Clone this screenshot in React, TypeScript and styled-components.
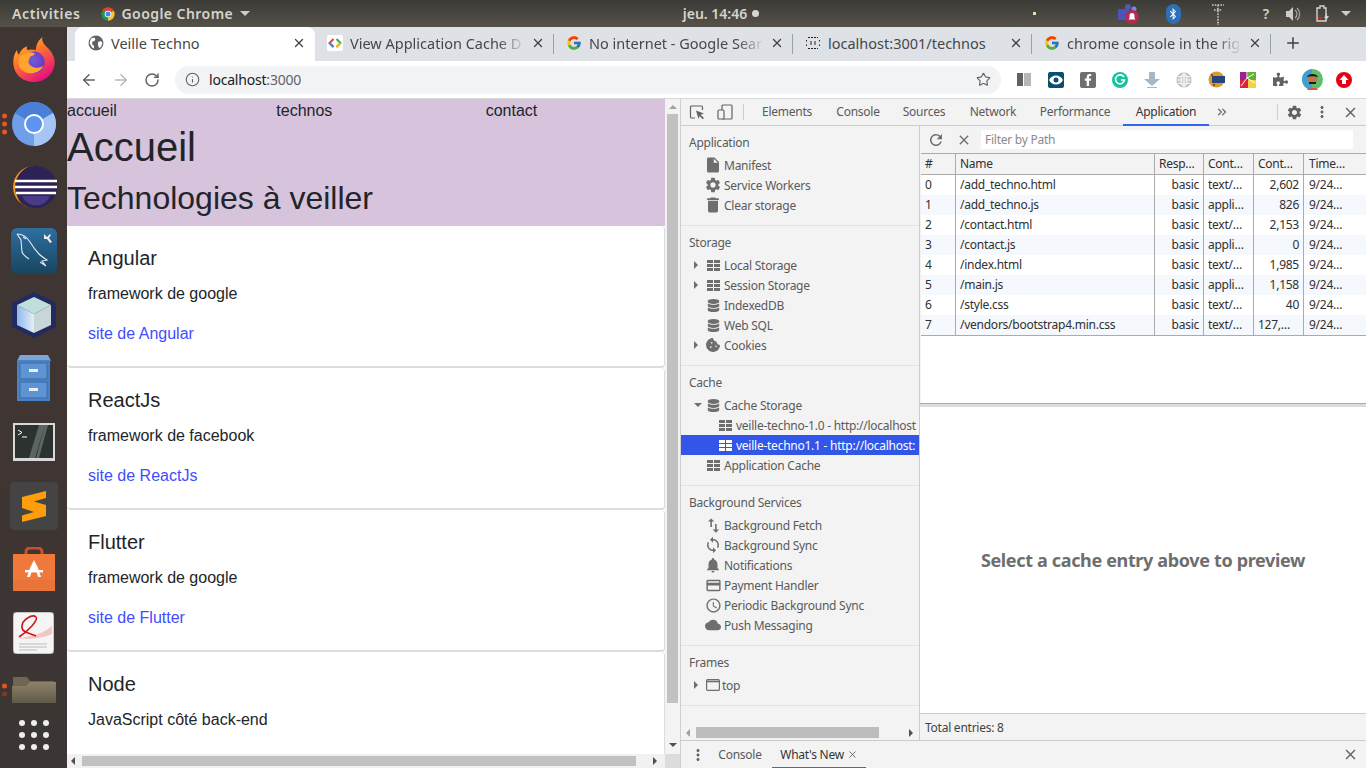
import React from 'react'
import styled, { createGlobalStyle } from 'styled-components'
import { FcGoogle } from 'react-icons/fc'
import { FaDatabase, FaCookieBite, FaPuzzlePiece, FaBluetoothB, FaFacebookF } from 'react-icons/fa'
import {
  MdAccessTime,
  MdClose,
  MdCloud,
  MdCreditCard,
  MdDelete,
  MdInsertDriveFile,
  MdMoreVert,
  MdNotifications,
  MdRefresh,
  MdSettings,
  MdSwapVert,
  MdSync,
} from 'react-icons/md'
import { ArrowLeft, ArrowRight, Info, RotateCw, Star, Plus, X, ChevronsRight } from 'lucide-react'

const UI_FONT = `'Noto Sans', 'Open Sans', sans-serif`
const PAGE_FONT = `'Liberation Sans', Arial, sans-serif`

const GlobalStyle = createGlobalStyle`
  html, body {
    margin: 0;
    padding: 0;
    width: 1366px;
    height: 768px;
    overflow: hidden;
    background: #3d3533;
  }
  * { box-sizing: border-box; }
`

const Screen = styled.div`
  width: 1366px;
  height: 768px;
  display: flex;
  flex-direction: column;
  overflow: hidden;
  font-family: ${UI_FONT};
`

const TopBar = styled.header`
  height: 27px;
  flex: none;
  display: grid;
  grid-template-columns: 1fr auto 1fr;
  align-items: center;
  background: linear-gradient(#3b3a36, #55524a);
  color: #d6d4cc;
  font-size: 14px;
  font-weight: 600;
  padding-left: 12px;
`

const TopLeft = styled.div`
  display: flex;
  align-items: center;
`

const AppName = styled.span`
  margin-left: 5px;
  letter-spacing: 0.45px;
`

const Caret = styled.span`
  width: 0;
  height: 0;
  margin-left: 7px;
  border-left: 5px solid transparent;
  border-right: 5px solid transparent;
  border-top: 5px solid #cfcdc5;
`

const Activities = styled.span`
  margin-right: 20px;
  letter-spacing: 0.6px;
`

const Clock = styled.div`
  display: flex;
  align-items: center;
  gap: 5px;
  margin-left: 64px;
`

const ClockDot = styled.span`
  width: 7px;
  height: 7px;
  border-radius: 50%;
  background: #d6d4cc;
`

const Tray = styled.div`
  display: flex;
  align-items: center;
  justify-content: flex-end;
  height: 27px;
  position: relative;
  padding-right: 15px;
`

const TrayDot = styled.span`
  position: absolute;
  right: 330px;
  top: 12px;
  width: 3px;
  height: 3px;
  background: #e8e2a0;
`

const TraySlot = styled.span<{ $w: number }>`
  width: ${(p) => p.$w}px;
  flex: none;
  display: flex;
  justify-content: center;
  align-items: center;
`

const BluetoothBadge = styled.span`
  width: 15px;
  height: 20px;
  flex: none;
  border-radius: 8px;
  background: #2f6fb5;
  color: #fff;
  display: flex;
  align-items: center;
  justify-content: center;
`

const Desktop = styled.div`
  flex: 1;
  display: flex;
  min-height: 0;
`

const Dock = styled.nav`
  width: 67px;
  flex: none;
  display: flex;
  flex-direction: column;
  align-items: center;
  background: linear-gradient(#3f3533, #3f3533 60%, #3b3633);
  padding: 1px 0 13px;
`

const DockItem = styled.div<{ $h?: number }>`
  height: ${(p) => p.$h ?? 63.7}px;
  width: 67px;
  flex: none;
  position: relative;
  display: flex;
  align-items: center;
  justify-content: center;
`

const RunDots = styled.div`
  position: absolute;
  left: 2px;
  top: 50%;
  transform: translateY(-50%);
  display: flex;
  flex-direction: column;
  gap: 3px;
`

const RunDot = styled.span<{ $dim?: boolean }>`
  width: 5px;
  height: 5px;
  border-radius: 50%;
  background: ${(p) => (p.$dim ? '#7c3a22' : '#e9541f')};
`

const Browser = styled.div`
  flex: 1;
  min-width: 0;
  display: flex;
  flex-direction: column;
`

const TabStrip = styled.div`
  height: 34px;
  flex: none;
  background: #dee1e6;
  display: flex;
  align-items: stretch;
  padding-left: 8px;
`

const Tab = styled.div<{ $active?: boolean }>`
  width: ${(p) => (p.$active ? 240 : 239)}px;
  flex: none;
  position: relative;
  display: flex;
  align-items: center;
  padding-left: ${(p) => (p.$active ? 13 : 12)}px;
  padding-bottom: 2px;
  background: ${(p) => (p.$active ? '#fff' : 'transparent')};
  border-radius: 8px 8px 0 0;
  color: #45474a;
  font-size: 14.5px;
  &::after {
    content: '';
    display: ${(p) => (p.$active ? 'none' : 'block')};
    position: absolute;
    right: 0;
    top: 7px;
    height: 20px;
    width: 1px;
    background: #9aa0a6;
  }
`

const TabIcon = styled.span`
  width: 16px;
  height: 16px;
  flex: none;
  display: flex;
  align-items: center;
  justify-content: center;
`

const TabTitle = styled.span<{ $fade?: boolean }>`
  margin-left: 7px;
  width: 175px;
  flex: none;
  white-space: nowrap;
  overflow: hidden;
  ${(p) =>
    p.$fade &&
    `-webkit-mask-image: linear-gradient(90deg, #000 85%, transparent 100%);
     mask-image: linear-gradient(90deg, #000 85%, transparent 100%);`}
`

const TabClose = styled.span`
  margin-left: 6px;
  display: flex;
  color: #3c4043;
`

const NewTab = styled.span`
  display: flex;
  align-items: center;
  margin-left: 13px;
  padding-bottom: 2px;
  color: #3c4043;
`

const Toolbar = styled.div`
  height: 38px;
  flex: none;
  background: #fff;
  display: flex;
  align-items: center;
  padding-left: 13px;
  border-bottom: 1px solid #d8d9dd;
`

const NavButton = styled.span<{ $off?: boolean }>`
  width: 32px;
  display: flex;
  color: ${(p) => (p.$off ? '#b5b7ba' : '#5f6368')};
`

const Omnibox = styled.div`
  width: 826px;
  height: 28px;
  margin-left: -1px;
  background: #f1f3f4;
  border-radius: 14px;
  display: flex;
  align-items: center;
  padding: 0 10px;
  font-size: 14px;
  letter-spacing: -0.2px;
  color: #202124;
`

const UrlHost = styled.span`
  margin-left: 9px;
`

const UrlPort = styled.span`
  color: #5f6368;
`

const OmniStar = styled.span`
  margin-left: auto;
  display: flex;
  color: #5f6368;
`

const Extensions = styled.div`
  display: flex;
  align-items: center;
  margin-left: 7px;
`

const ExtSlot = styled.span`
  width: 32px;
  height: 32px;
  display: flex;
  align-items: center;
  justify-content: center;
`

const ExtBadge = styled.span<{ $bg: string; $round?: boolean }>`
  width: 16px;
  height: 16px;
  display: flex;
  align-items: center;
  justify-content: center;
  background: ${(p) => p.$bg};
  border-radius: ${(p) => (p.$round ? '50%' : '2px')};
  color: #fff;
  overflow: hidden;
`

const Content = styled.div`
  flex: 1;
  min-height: 0;
  display: flex;
`

const PagePane = styled.div`
  width: 614px;
  flex: none;
  display: flex;
  flex-direction: column;
  font-family: ${PAGE_FONT};
  border-right: 1px solid #cfcfcf;
`

const PageTop = styled.div`
  flex: 1;
  min-height: 0;
  display: flex;
`

const Viewport = styled.main`
  width: 598px;
  flex: none;
  overflow: hidden;
  background: #fff;
  color: #212529;
`

const Banner = styled.div`
  background: #d7c3dc;
  height: 127px;
`

const Menu = styled.div`
  width: 628px;
  display: grid;
  grid-template-columns: repeat(3, 1fr);
  font-size: 16px;
  line-height: 24px;
  height: 24px;
`

const H1 = styled.h1`
  margin: 0 0 8px;
  font-size: 40px;
  font-weight: 400;
  line-height: 48px;
`

const H2 = styled.h2`
  margin: 0;
  font-size: 32px;
  font-weight: 400;
  line-height: 38px;
`

const TechCard = styled.section`
  height: 142px;
  border: 1px solid #dcdcdc;
  border-width: 0 1px 2px 0;
  border-radius: 4px;
  padding: 20px 21px;
  background: #fff;
`

const TechTitle = styled.h5`
  margin: 0 0 12px;
  font-size: 20px;
  font-weight: 400;
  line-height: 24px;
`

const TechText = styled.p`
  margin: 0 0 16px;
  font-size: 16px;
  line-height: 24px;
`

const TechLink = styled.a`
  font-size: 16px;
  line-height: 24px;
  color: #3f4dff;
  text-decoration: none;
`

const VScroll = styled.div`
  width: 15px;
  flex: none;
  display: flex;
  flex-direction: column;
  align-items: center;
  background: #f3f3f3;
`

const UpSlot = styled.span`
  height: 15px;
  flex: none;
  display: flex;
  align-items: center;
`

const VThumb = styled.div`
  width: 11px;
  height: 589px;
  background: #c1c1c1;
`

const ArrowSlot = styled.span`
  margin-top: auto;
  height: 18px;
  display: flex;
  align-items: center;
`

const Tri = styled.span<{ $dir: 'up' | 'down' | 'left' | 'right'; $c?: string; $s?: number }>`
  width: 0;
  height: 0;
  flex: none;
  ${(p) => {
    const s = p.$s ?? 4
    const c = p.$c ?? '#505050'
    if (p.$dir === 'down')
      return `border-left:${s}px solid transparent;border-right:${s}px solid transparent;border-top:${s}px solid ${c};`
    if (p.$dir === 'up')
      return `border-left:${s}px solid transparent;border-right:${s}px solid transparent;border-bottom:${s}px solid ${c};`
    if (p.$dir === 'left')
      return `border-top:${s}px solid transparent;border-bottom:${s}px solid transparent;border-right:${s}px solid ${c};`
    return `border-top:${s}px solid transparent;border-bottom:${s}px solid transparent;border-left:${s}px solid ${c};`
  }}
`

const HScroll = styled.div`
  height: 14px;
  flex: none;
  background: #f1f1f1;
  display: flex;
  align-items: center;
  padding-left: 4px;
`

const HThumb = styled.div`
  width: 554px;
  height: 10px;
  margin-left: 7px;
  background: #c1c1c1;
`

const HRight = styled.span`
  margin-left: 17px;
  display: flex;
`

const Corner = styled.div`
  width: 15px;
  height: 14px;
  margin-left: auto;
  background: #dcdcdc;
`

const DevTools = styled.div`
  flex: 1;
  min-width: 0;
  display: flex;
  flex-direction: column;
  background: #f3f3f3;
  color: #5a5a5a;
  font-size: 12px;
  letter-spacing: -0.25px;
`

const DevTabs = styled.div`
  height: 27px;
  flex: none;
  display: flex;
  align-items: stretch;
  border-bottom: 1px solid #ccc;
`

const DevTool = styled.span<{ $w: number }>`
  width: ${(p) => p.$w}px;
  flex: none;
  display: flex;
  align-items: center;
  justify-content: center;
  color: #5f6368;
`

const DevSep = styled.span<{ $ml?: number; $mr?: number }>`
  width: 1px;
  height: 16px;
  flex: none;
  align-self: center;
  margin: 0 ${(p) => p.$mr ?? 0}px 0 ${(p) => p.$ml ?? 0}px;
  background: #ccc;
`

const Spacer = styled.span`
  flex: 1;
`

const DevTab = styled.span<{ $active?: boolean; $w: number }>`
  width: ${(p) => p.$w}px;
  flex: none;
  display: flex;
  align-items: center;
  justify-content: center;
  color: ${(p) => (p.$active ? '#333' : '#5a5a5a')};
  border-bottom: 2px solid ${(p) => (p.$active ? '#3367f0' : 'transparent')};
  margin-bottom: -1px;
`

const DrawerConsole = styled(DevTab)`
  padding-right: 6px;
`

const DevBody = styled.div`
  flex: 1;
  min-height: 0;
  display: flex;
`

const Sidebar = styled.aside`
  width: 239px;
  flex: none;
  display: flex;
  flex-direction: column;
  border-right: 1px solid #ccc;
  overflow: hidden;
`

const SideSection = styled.div`
  padding-bottom: 10px;
  border-bottom: 1px solid #e2e2e2;
  &:last-of-type {
    border-bottom: 0;
  }
`

const SideHeader = styled.div`
  height: 29px;
  padding: 9px 8px 4px;
  line-height: 16px;
`

const SideItem = styled.div<{ $depth?: number; $selected?: boolean }>`
  height: 20px;
  display: flex;
  align-items: center;
  white-space: nowrap;
  overflow: hidden;
  padding-left: ${(p) => (p.$depth ? 37 : 25)}px;
  color: ${(p) => (p.$selected ? '#fff' : '#5a5a5a')};
  background: ${(p) => (p.$selected ? '#3156e8' : 'transparent')};
`

const SideArrow = styled.span`
  width: 13px;
  margin-left: -13px;
  padding-left: 1px;
  flex: none;
  display: flex;
`

const SideIcon = styled.span<{ $tight?: boolean }>`
  width: 14px;
  height: 16px;
  flex: none;
  margin-right: ${(p) => (p.$tight ? 2 : 4)}px;
  display: flex;
  align-items: center;
  justify-content: center;
  color: #6e6e6e;
  svg {
    flex: none;
  }
`

const SideScroll = styled.div`
  height: 15px;
  margin-top: auto;
  flex: none;
  display: flex;
  align-items: center;
  padding-left: 5px;
`

const SideThumb = styled.div`
  width: 183px;
  height: 11px;
  margin-left: 6px;
  background: #bdbdbd;
`

const SideRight = styled.span`
  margin-left: 30px;
  display: flex;
`

const CachePanel = styled.div`
  flex: 1;
  min-width: 0;
  display: flex;
  flex-direction: column;
`

const CacheBar = styled.div`
  height: 27px;
  flex: none;
  display: flex;
  align-items: center;
  padding-left: 4px;
  color: #6e6e6e;
`

const BarButton = styled.span`
  width: 24px;
  display: flex;
  justify-content: center;
  margin-right: 4px;
`

const FilterInput = styled.div`
  width: 372px;
  height: 19px;
  margin-left: 1px;
  padding-left: 4px;
  background: #fff;
  color: #8a8a8a;
  line-height: 19px;
`

const Table = styled.div`
  height: 250px;
  flex: none;
  background: #fff;
  border-top: 1px solid #ababab;
  margin-left: 1px;
  color: #303030;
`

const Row = styled.div<{ $odd?: boolean; $head?: boolean }>`
  display: grid;
  grid-template-columns: 35px 199px 49px 50px 50px 1fr;
  height: ${(p) => (p.$head ? 21 : 20)}px;
  background: ${(p) => (p.$head ? '#f3f3f3' : p.$odd ? '#f5f8fd' : '#fff')};
  border-bottom: ${(p) => (p.$head ? '1px solid #ababab' : '0')};
  &:last-of-type {
    height: 21px;
    border-bottom: 1px solid #ababab;
  }
`

const Cell = styled.span<{ $right?: boolean }>`
  padding: 0 4px;
  line-height: 20px;
  border-right: 1px solid #ababab;
  white-space: nowrap;
  overflow: hidden;
  text-align: ${(p) => (p.$right ? 'right' : 'left')};
  &:last-child {
    border-right: 0;
    padding-left: 5px;
  }
`

const Divider = styled.div`
  height: 4px;
  flex: none;
  background: #dcdcdc;
  border-top: 1px solid #ababab;
`

const Preview = styled.div`
  flex: 1;
  min-height: 0;
  background: #fff;
  display: flex;
  align-items: center;
  justify-content: center;
  color: #6e6e6e;
  font-size: 18px;
  font-weight: 700;
  letter-spacing: -0.35px;
`

const StatusBar = styled.div`
  height: 27px;
  flex: none;
  border-top: 1px solid #ccc;
  line-height: 27px;
  padding-left: 5px;
  color: #444;
`

const Drawer = styled.div`
  height: 28px;
  flex: none;
  border-top: 1px solid #ccc;
  display: flex;
  align-items: stretch;
`

const DrawerClose = styled.span`
  margin-left: auto;
  width: 24px;
  display: flex;
  align-items: center;
  color: #5f6368;
`

const GridIcon = ({ color = '#6e6e6e' }: { color?: string }) => (
  <svg width="13" height="11" viewBox="0 0 13 11" fill={color}>
    <rect x="0" y="0" width="6" height="3" />
    <rect x="7" y="0" width="6" height="3" />
    <rect x="0" y="4" width="6" height="3" />
    <rect x="7" y="4" width="6" height="3" />
    <rect x="0" y="8" width="6" height="3" />
    <rect x="7" y="8" width="6" height="3" />
  </svg>
)

const InspectIcon = () => (
  <svg width="16" height="16" viewBox="0 0 16 16" fill="none">
    <path d="M6 14H2.5a1 1 0 0 1-1-1V3a1 1 0 0 1 1-1h10a1 1 0 0 1 1 1v3" stroke="#5f6368" strokeWidth="1.2" />
    <path d="M7 6.5l8 3-3.4 1.2L15 14l-1.2 1.2-3.2-3.2L9.5 15z" fill="#5f6368" />
  </svg>
)

const DeviceIcon = () => (
  <svg width="16" height="16" viewBox="0 0 16 16" fill="none" stroke="#5f6368" strokeWidth="1.2">
    <rect x="5" y="1" width="10" height="14" rx="1" />
    <rect x="1" y="6" width="6" height="9" rx="1" fill="#f3f3f3" />
  </svg>
)

const ChromeLogo = ({ size = 16 }: { size?: number }) => (
  <svg width={size} height={size} viewBox="0 0 48 48">
    <path d="M24 24 L6.7 14 A20 20 0 0 1 41.3 14 Z" fill="#db4437" />
    <path d="M24 24 L41.3 14 A20 20 0 0 1 24 44 Z" fill="#fbc02d" />
    <path d="M24 24 L24 44 A20 20 0 0 1 6.7 14 Z" fill="#0f9d58" />
    <circle cx="24" cy="24" r="10" fill="#fff" />
    <circle cx="24" cy="24" r="7.5" fill="#4285f4" />
  </svg>
)

const GlobeIcon = () => (
  <svg width="16" height="16" viewBox="0 0 16 16">
    <circle cx="8" cy="8" r="7.5" fill="#5f6368" />
    <path d="M3 3.5l3-1 1.5 1.5-1 2-2 .5-.5 2.5 2 2v2.5l-2-1L1.5 8zM10 7l3-1 1.5 2-1.5 4-2 1-1-3z" fill="#fff" />
  </svg>
)

const CodeFavicon = () => (
  <svg width="16" height="16" viewBox="0 0 16 16">
    <rect width="16" height="16" rx="2" fill="#fff" />
    <path d="M6.5 4L2.5 8l4 4" stroke="#ea4335" strokeWidth="2" fill="none" />
    <path d="M9.5 4l4 4-4 4" stroke="#34a853" strokeWidth="2" fill="none" />
    <path d="M2.5 8l4 4" stroke="#4285f4" strokeWidth="2" fill="none" />
    <path d="M13.5 8l-4 4" stroke="#fbbc04" strokeWidth="2" fill="none" />
  </svg>
)

const DashedFavicon = () => (
  <svg width="16" height="14" viewBox="0 0 16 14" fill="none" stroke="#222" strokeWidth="1">
    <path d="M3 1.5h10M3 12.5h10M1.5 4v1.5M14.5 4v1.5M1.5 8.5V10M14.5 8.5V10" strokeDasharray="2 1" />
    <path d="M6 5v4M10 5v4" />
  </svg>
)

const FirefoxLogo = () => (
  <svg width="46" height="47" viewBox="0 0 48 50">
    <defs>
      <linearGradient id="ffa" x1="0" y1="0" x2="0.6" y2="1">
        <stop offset="0" stopColor="#ffd42e" />
        <stop offset="0.45" stopColor="#ff7a2a" />
        <stop offset="1" stopColor="#e6127d" />
      </linearGradient>
      <radialGradient id="ffb" cx="0.45" cy="0.4" r="0.7">
        <stop offset="0" stopColor="#6a5de0" />
        <stop offset="1" stopColor="#7a2bb5" />
      </radialGradient>
    </defs>
    <path d="M24 49C10 49 2 39 2 28c0-6 2-11 4-13 0 3 1 4 2 5 1-4 5-8 9-9-1 2-1 3 0 4 3-1 6-1 9 0 0-5 2-10 7-14-1 4 1 7 5 11 5 5 8 10 8 16 0 12-10 21-22 21z" fill="url(#ffa)" />
    <circle cx="24" cy="28" r="11.5" fill="url(#ffb)" />
    <path d="M9 22c4-4 11-6 15-4 3 1-2 3-4 4-1 3-4 6 1 10 4 3 9 2 13 0-4 8-15 10-22 5-5-4-6-10-3-15z" fill="#ffa52e" />
  </svg>
)

const ChromiumLogo = () => (
  <svg width="46" height="46" viewBox="0 0 46 46">
    <circle cx="23" cy="23" r="22" fill="#6f9fe8" />
    <path d="M23 23L4 12a22 22 0 0 1 38 0z" fill="#4a7fd8" />
    <path d="M23 23L42 12a22 22 0 0 1-19 33z" fill="#a5c5f5" />
    <circle cx="23" cy="23" r="10" fill="#fff" />
    <circle cx="23" cy="23" r="8" fill="#5c94ee" />
  </svg>
)

const EclipseLogo = () => (
  <svg width="48" height="44" viewBox="0 0 48 44">
    <path d="M24 1A21 21 0 1 0 24 43 C10 43 6 32 6 22 6 10 14 1 24 1z" fill="#f7941e" />
    <circle cx="26" cy="22" r="21" fill="#2c2255" />
    <path d="M5 16h42M5 22h42M6 28h40" stroke="#fff" strokeWidth="2.4" />
    <path d="M12 31a15 15 0 0 0 28 0z" fill="#4a3a8a" />
  </svg>
)

const MysqlLogo = () => (
  <svg width="46" height="46" viewBox="0 0 46 46">
    <defs>
      <linearGradient id="my" x1="0" y1="0" x2="0" y2="1">
        <stop offset="0" stopColor="#2f6f9f" />
        <stop offset="1" stopColor="#174560" />
      </linearGradient>
    </defs>
    <rect width="46" height="46" rx="6" fill="url(#my)" />
    <path d="M6 6c6 0 10 3 13 8s5 8 9 12c2 2 5 4 8 6l-5 1 4 5-6-4M6 6l4 6 1 12c1 3 4 5 7 7M12 9l3 2" stroke="#dfeaf2" strokeWidth="1.1" fill="none" />
    <path d="M33 6l3 3 3-3 1 1-2 3 3 4-2 1-3-4-3 0z" fill="#e8eef2" />
  </svg>
)

const VBoxLogo = () => (
  <svg width="46" height="48" viewBox="0 0 46 48">
    <defs>
      <linearGradient id="vb" x1="0" y1="0" x2="1" y2="0">
        <stop offset="0" stopColor="#8db8ee" />
        <stop offset="1" stopColor="#e4eef8" />
      </linearGradient>
    </defs>
    <path d="M23 1l22 11v24L23 47 1 36V12z" fill="#232a60" />
    <path d="M23 6l17 8-17 9-17-9z" fill="#c0dedb" />
    <path d="M6 14l17 9v19L6 34z" fill="url(#vb)" />
    <path d="M40 14l-17 9v19l17-8z" fill="#c9d6d8" />
  </svg>
)

const CabinetLogo = () => (
  <svg width="34" height="46" viewBox="0 0 34 46">
    <path d="M3 0h28l3 6H0z" fill="#7da6d6" />
    <rect y="5" width="33" height="41" fill="#4a82c6" />
    <rect x="3" y="8" width="27" height="16" fill="#5e94d4" stroke="#3a6aa5" />
    <rect x="3" y="27" width="27" height="16" fill="#5e94d4" stroke="#3a6aa5" />
    <rect x="12" y="14" width="9" height="3" fill="#eee" />
    <rect x="12" y="33" width="9" height="3" fill="#eee" />
  </svg>
)

const TerminalLogo = () => (
  <svg width="42" height="38" viewBox="0 0 42 38">
    <rect width="42" height="38" fill="#d8d8d8" />
    <rect x="2" y="2" width="38" height="33" fill="#2c3230" />
    <path d="M26 2h6L22 35h-6zM32 2h3L26 35h-3z" fill="#5b6663" />
    <path d="M5 7l4 2.5L5 12" stroke="#fff" fill="none" />
    <path d="M9 14h5" stroke="#fff" />
  </svg>
)

const SublimeLogo = () => (
  <svg width="48" height="48" viewBox="0 0 48 48">
    <rect width="48" height="48" rx="4" fill="#444444" />
    <path d="M36 9L12 15V26L24 30L12 33.5V40L36 34V23L24 19.5L36 16Z" fill="#ff9d0a" />
  </svg>
)

const StoreLogo = () => (
  <svg width="42" height="44" viewBox="0 0 42 44">
    <path d="M13 9V5a4 4 0 0 1 4-4h8a4 4 0 0 1 4 4v4" fill="none" stroke="#c7512a" strokeWidth="3" />
    <rect y="7" width="42" height="37" fill="#f0783a" />
    <rect y="33" width="42" height="11" fill="#e8743a" />
    <path d="M17 21l4-8 4 8 3 9h-3l-1.5-5h-5L17 30h-3z" fill="#fff" />
    <rect x="12" y="23" width="18" height="2.4" fill="#fff" />
  </svg>
)

const ReaderLogo = () => (
  <svg width="41" height="42" viewBox="0 0 41 42">
    <rect width="41" height="42" rx="4" fill="#f5f5f5" stroke="#999" />
    <path d="M4 26c10 0 30-5 35-13v9c-8 4-24 6-35 4z" fill="#f4c5c5" />
    <path d="M6 25C14 20 26 8 23 5 20 2 8 7 9 16c1 5 8 5 14 8" stroke="#cc1818" strokeWidth="1.6" fill="none" />
    <path d="M6 32h28M6 35h28M6 38h18" stroke="#bbb" strokeWidth="1" />
  </svg>
)

const FolderLogo = () => (
  <svg width="44" height="26" viewBox="0 0 44 26">
    <defs>
      <linearGradient id="fold" x1="0" y1="0" x2="0" y2="1">
        <stop offset="0" stopColor="#8f8269" />
        <stop offset="1" stopColor="#5f594a" />
      </linearGradient>
    </defs>
    <path d="M1 0h14l3 4h24v18H1z" fill="#6f6553" />
    <path d="M0 9h14l4-4h26v21H0z" fill="url(#fold)" />
  </svg>
)

const AppsGrid = styled.div`
  display: grid;
  grid-template-columns: repeat(3, 6px);
  gap: 6px;
`

const AppsDot = styled.span`
  width: 6px;
  height: 6px;
  border-radius: 50%;
  background: #eee;
`

const tabs = [
  { title: 'View Application Cache D', icon: <CodeFavicon />, fade: true },
  { title: 'No internet - Google Sear', icon: <FcGoogle size={16} />, fade: true },
  { title: 'localhost:3001/technos', icon: <DashedFavicon /> },
  { title: 'chrome console in the rig', icon: <FcGoogle size={16} />, fade: true },
]

const techs = [
  { name: 'Angular', text: 'framework de google' },
  { name: 'ReactJs', text: 'framework de facebook' },
  { name: 'Flutter', text: 'framework de google' },
  { name: 'Node', text: 'JavaScript côté back-end' },
]

const devTabs: [string, number, boolean?][] = [
  ['Elements', 80],
  ['Console', 62],
  ['Sources', 70],
  ['Network', 68],
  ['Performance', 96],
  ['Application', 86, true],
]

const entries = [
  ['0', '/add_techno.html', 'text/…', '2,602'],
  ['1', '/add_techno.js', 'appli…', '826'],
  ['2', '/contact.html', 'text/…', '2,153'],
  ['3', '/contact.js', 'appli…', '0'],
  ['4', '/index.html', 'text/…', '1,985'],
  ['5', '/main.js', 'appli…', '1,158'],
  ['6', '/style.css', 'text/…', '40'],
  ['7', '/vendors/bootstrap4.min.css', 'text/…', '127,…'],
]

const expand = <Tri $dir="right" $s={4} $c="#6e6e6e" />

export default function App() {
  return (
    <Screen>
      <GlobalStyle />
      <TopBar>
        <TopLeft>
          <Activities>Activities</Activities>
          <ChromeLogo />
          <AppName>Google Chrome</AppName>
          <Caret />
        </TopLeft>
        <Clock>
          jeu. 14:46
          <ClockDot />
        </Clock>
        <Tray>
          <TrayDot />
          <TraySlot $w={76}>
            <svg width="24" height="22" viewBox="0 0 24 22">
              <circle cx="12" cy="4" r="3" fill="#5558af" />
              <circle cx="18" cy="6" r="2.5" fill="#7b83eb" />
              <rect x="2" y="6" width="11" height="11" rx="1" fill="#4b53bc" />
              <circle cx="16" cy="14" r="7" fill="#b22b50" />
              <path d="M12.5 16.5h7l-1-1.5v-2.5a2.5 2.5 0 0 0-5 0V15z" fill="#fff" />
            </svg>
          </TraySlot>
          <TraySlot $w={14}>
            <BluetoothBadge>
              <FaBluetoothB size={12} />
            </BluetoothBadge>
          </TraySlot>
          <TraySlot $w={76}>
            <svg width="14" height="22" viewBox="0 0 14 22" fill="none" stroke="#cfcdc5" strokeWidth="1.6" strokeDasharray="1.6 1.2">
              <path d="M1 2h12M7 2v20M3 7h8" />
            </svg>
          </TraySlot>
          <TraySlot $w={20}>?</TraySlot>
          <TraySlot $w={36}>
            <svg width="16" height="14" viewBox="0 0 16 14" fill="#cfcdc5">
              <path d="M0 4h3l4-4v14l-4-4H0z" />
              <path d="M9 3a5 5 0 0 1 0 8M11 1a8 8 0 0 1 0 12" stroke="#a9a79f" strokeWidth="1.2" fill="none" />
            </svg>
          </TraySlot>
          <TraySlot $w={22}>
            <svg width="14" height="18" viewBox="0 0 14 18" fill="none">
              <path d="M4 1h4v2h2v13H1V3h3z" stroke="#d6d4cc" strokeWidth="1.4" />
              <rect x="2" y="12" width="4" height="2" fill="#d0241e" />
              <path d="M11 8l-3 5h2l-1 4 4-6h-2z" fill="#d6d4cc" />
            </svg>
          </TraySlot>
          <Caret />
        </Tray>
      </TopBar>
      <Desktop>
        <Dock>
          <DockItem>
            <FirefoxLogo />
          </DockItem>
          <DockItem>
            <RunDots>
              <RunDot />
              <RunDot />
              <RunDot />
            </RunDots>
            <ChromiumLogo />
          </DockItem>
          <DockItem>
            <EclipseLogo />
          </DockItem>
          <DockItem>
            <MysqlLogo />
          </DockItem>
          <DockItem>
            <VBoxLogo />
          </DockItem>
          <DockItem>
            <CabinetLogo />
          </DockItem>
          <DockItem>
            <TerminalLogo />
          </DockItem>
          <DockItem>
            <SublimeLogo />
          </DockItem>
          <DockItem>
            <StoreLogo />
          </DockItem>
          <DockItem>
            <ReaderLogo />
          </DockItem>
          <DockItem $h={50}>
            <RunDots>
              <RunDot />
              <RunDot $dim />
            </RunDots>
            <FolderLogo />
          </DockItem>
          <DockItem $h={40}>
            <AppsGrid>
              {Array.from({ length: 9 }).map((_, i) => (
                <AppsDot key={i} />
              ))}
            </AppsGrid>
          </DockItem>
        </Dock>
        <Browser>
          <TabStrip>
            <Tab $active>
              <TabIcon>
                <GlobeIcon />
              </TabIcon>
              <TabTitle>Veille Techno</TabTitle>
              <TabClose>
                <X size={14} strokeWidth={2.2} />
              </TabClose>
            </Tab>
            {tabs.map((t) => (
              <Tab key={t.title}>
                <TabIcon>{t.icon}</TabIcon>
                <TabTitle $fade={t.fade}>{t.title}</TabTitle>
                <TabClose>
                  <X size={14} strokeWidth={2.2} />
                </TabClose>
              </Tab>
            ))}
            <NewTab>
              <Plus size={18} strokeWidth={2} />
            </NewTab>
          </TabStrip>
          <Toolbar>
            <NavButton>
              <ArrowLeft size={18} strokeWidth={2} />
            </NavButton>
            <NavButton $off>
              <ArrowRight size={18} strokeWidth={2} />
            </NavButton>
            <NavButton>
              <RotateCw size={16} strokeWidth={2.2} />
            </NavButton>
            <Omnibox>
              <Info size={15} strokeWidth={1.8} color="#5f6368" />
              <UrlHost>
                localhost<UrlPort>:3000</UrlPort>
              </UrlHost>
              <OmniStar>
                <Star size={15} strokeWidth={1.8} />
              </OmniStar>
            </Omnibox>
            <Extensions>
              <ExtSlot>
                <svg width="14" height="13" viewBox="0 0 14 13">
                  <rect width="6" height="13" fill="#5f6368" />
                  <rect x="7" width="7" height="13" fill="#b5b7ba" />
                </svg>
              </ExtSlot>
              <ExtSlot>
                <ExtBadge $bg="#0b4f6c">
                  <svg width="14" height="10" viewBox="0 0 14 10">
                    <path d="M0 5c3-6 11-6 14 0-3 6-11 6-14 0z" fill="#fff" />
                    <circle cx="7" cy="5" r="2.5" fill="#0b4f6c" />
                  </svg>
                </ExtBadge>
              </ExtSlot>
              <ExtSlot>
                <ExtBadge $bg="#6d6f72">
                  <FaFacebookF size={12} />
                </ExtBadge>
              </ExtSlot>
              <ExtSlot>
                <ExtBadge $bg="#15c39a" $round>
                  <svg width="12" height="12" viewBox="0 0 12 12" fill="none" stroke="#fff" strokeWidth="1.6">
                    <path d="M10 3.2A4.5 4.5 0 1 0 10.5 6H7" />
                  </svg>
                </ExtBadge>
              </ExtSlot>
              <ExtSlot>
                <svg width="16" height="16" viewBox="0 0 16 16" fill="#a6b8c6">
                  <path d="M5 0h6v7h5l-8 7-8-7h5z" />
                  <rect x="3" y="15" width="10" height="1" />
                </svg>
              </ExtSlot>
              <ExtSlot>
                <svg width="16" height="16" viewBox="0 0 16 16" fill="none" stroke="#b4b4b4" strokeWidth="1.1">
                  <circle cx="8" cy="8" r="7" fill="#cfcfcf" />
                  <path d="M1 8h14M8 1v14M2 4.5h12M2 11.5h12M8 1c-4 4-4 10 0 14M8 1c4 4 4 10 0 14" stroke="#f2f2f2" />
                </svg>
              </ExtSlot>
              <ExtSlot>
                <svg width="17" height="17" viewBox="0 0 17 17">
                  <circle cx="8.5" cy="8.5" r="8" fill="#d99a32" />
                  <rect x="4" y="5" width="13" height="7" fill="#27467e" />
                  <circle cx="4" cy="4" r="1" fill="#6b3d12" />
                  <circle cx="6" cy="14" r="1" fill="#6b3d12" />
                </svg>
              </ExtSlot>
              <ExtSlot>
                <svg width="16" height="16" viewBox="0 0 16 16">
                  <rect width="8" height="8" fill="#9c1f8c" />
                  <rect x="8" width="8" height="8" fill="#5cb531" />
                  <rect y="8" width="8" height="8" fill="#d9263a" />
                  <rect x="8" y="8" width="8" height="8" fill="#f3d43f" />
                  <path d="M7 0v6L1 14M7 6l8 5M7 6l7-4" stroke="#fff" fill="none" />
                </svg>
              </ExtSlot>
              <ExtSlot>
                <FaPuzzlePiece size={15} color="#5f6368" />
              </ExtSlot>
              <ExtSlot>
                <svg width="21" height="21" viewBox="0 0 21 21">
                  <circle cx="10.5" cy="10.5" r="10.5" fill="#5cc06a" />
                  <path d="M0 10.5A10.5 10.5 0 0 1 10 0v21A10.5 10.5 0 0 1 0 10.5z" fill="#3ea0d8" />
                  <circle cx="10.5" cy="10" r="5" fill="#b57a4e" />
                  <path d="M5 8c1-4 10-4 11 0-3-1-8-1-11 0z" fill="#1b1b1b" />
                  <path d="M7 13h7v2H7z" fill="#2b1a10" />
                  <path d="M5 21c1-3 10-3 11 0z" fill="#e8503a" />
                </svg>
              </ExtSlot>
              <ExtSlot>
                <svg width="16" height="16" viewBox="0 0 16 16">
                  <circle cx="8" cy="8" r="8" fill="#e60012" />
                  <path d="M8 3l4.5 5H10v4H6V8H3.5z" fill="#fff" />
                </svg>
              </ExtSlot>
            </Extensions>
          </Toolbar>
          <Content>
            <PagePane>
              <PageTop>
                <Viewport>
                  <Banner>
                    <Menu>
                      <span>accueil</span>
                      <span>technos</span>
                      <span>contact</span>
                    </Menu>
                    <H1>Accueil</H1>
                    <H2>Technologies à veiller</H2>
                  </Banner>
                  {techs.map((t) => (
                    <TechCard key={t.name}>
                      <TechTitle>{t.name}</TechTitle>
                      <TechText>{t.text}</TechText>
                      {t.name !== 'Node' && <TechLink>site de {t.name}</TechLink>}
                    </TechCard>
                  ))}
                </Viewport>
                <VScroll>
                  <UpSlot>
                    <Tri $dir="up" $c="#a3a3a3" />
                  </UpSlot>
                  <VThumb />
                  <ArrowSlot>
                    <Tri $dir="down" />
                  </ArrowSlot>
                </VScroll>
              </PageTop>
              <HScroll>
                <Tri $dir="left" />
                <HThumb />
                <HRight>
                  <Tri $dir="right" />
                </HRight>
                <Corner />
              </HScroll>
            </PagePane>
            <DevTools>
              <DevTabs>
                <DevTool $w={32}>
                  <InspectIcon />
                </DevTool>
                <DevTool $w={24}>
                  <DeviceIcon />
                </DevTool>
                <DevSep $ml={6} $mr={3} />
                {devTabs.map(([label, w, active]) => (
                  <DevTab key={label} $w={w} $active={active}>
                    {label}
                  </DevTab>
                ))}
                <DevTool $w={26}>
                  <ChevronsRight size={14} />
                </DevTool>
                <Spacer />
                <DevSep />
                <DevTool $w={32}>
                  <MdSettings size={17} />
                </DevTool>
                <DevTool $w={24}>
                  <MdMoreVert size={18} />
                </DevTool>
                <DevTool $w={32}>
                  <MdClose size={17} />
                </DevTool>
              </DevTabs>
              <DevBody>
                <Sidebar>
                  <SideSection>
                    <SideHeader>Application</SideHeader>
                    <SideItem>
                      <SideIcon>
                        <MdInsertDriveFile size={18} />
                      </SideIcon>
                      Manifest
                    </SideItem>
                    <SideItem>
                      <SideIcon>
                        <MdSettings size={18} />
                      </SideIcon>
                      Service Workers
                    </SideItem>
                    <SideItem>
                      <SideIcon>
                        <MdDelete size={20} />
                      </SideIcon>
                      Clear storage
                    </SideItem>
                  </SideSection>
                  <SideSection>
                    <SideHeader>Storage</SideHeader>
                    <SideItem>
                      <SideArrow>{expand}</SideArrow>
                      <SideIcon>
                        <GridIcon />
                      </SideIcon>
                      Local Storage
                    </SideItem>
                    <SideItem>
                      <SideArrow>{expand}</SideArrow>
                      <SideIcon>
                        <GridIcon />
                      </SideIcon>
                      Session Storage
                    </SideItem>
                    <SideItem>
                      <SideIcon>
                        <FaDatabase size={13} />
                      </SideIcon>
                      IndexedDB
                    </SideItem>
                    <SideItem>
                      <SideIcon>
                        <FaDatabase size={13} />
                      </SideIcon>
                      Web SQL
                    </SideItem>
                    <SideItem>
                      <SideArrow>{expand}</SideArrow>
                      <SideIcon>
                        <FaCookieBite size={14} />
                      </SideIcon>
                      Cookies
                    </SideItem>
                  </SideSection>
                  <SideSection>
                    <SideHeader>Cache</SideHeader>
                    <SideItem>
                      <SideArrow>
                        <Tri $dir="down" $s={4} $c="#6e6e6e" />
                      </SideArrow>
                      <SideIcon>
                        <FaDatabase size={13} />
                      </SideIcon>
                      Cache Storage
                    </SideItem>
                    <SideItem $depth={1}>
                      <SideIcon>
                        <GridIcon />
                      </SideIcon>
                      veille-techno-1.0 - http://localhost
                    </SideItem>
                    <SideItem $depth={1} $selected>
                      <SideIcon>
                        <GridIcon color="#fff" />
                      </SideIcon>
                      veille-techno1.1 - http://localhost:
                    </SideItem>
                    <SideItem>
                      <SideIcon>
                        <GridIcon />
                      </SideIcon>
                      Application Cache
                    </SideItem>
                  </SideSection>
                  <SideSection>
                    <SideHeader>Background Services</SideHeader>
                    <SideItem>
                      <SideIcon>
                        <MdSwapVert size={19} />
                      </SideIcon>
                      Background Fetch
                    </SideItem>
                    <SideItem>
                      <SideIcon>
                        <MdSync size={18} />
                      </SideIcon>
                      Background Sync
                    </SideItem>
                    <SideItem>
                      <SideIcon>
                        <MdNotifications size={18} />
                      </SideIcon>
                      Notifications
                    </SideItem>
                    <SideItem>
                      <SideIcon>
                        <MdCreditCard size={17} />
                      </SideIcon>
                      Payment Handler
                    </SideItem>
                    <SideItem>
                      <SideIcon>
                        <MdAccessTime size={17} />
                      </SideIcon>
                      Periodic Background Sync
                    </SideItem>
                    <SideItem>
                      <SideIcon>
                        <MdCloud size={16} />
                      </SideIcon>
                      Push Messaging
                    </SideItem>
                  </SideSection>
                  <SideSection>
                    <SideHeader>Frames</SideHeader>
                    <SideItem>
                      <SideArrow>{expand}</SideArrow>
                      <SideIcon $tight>
                        <svg width="14" height="12" viewBox="0 0 14 12" fill="none" stroke="#6e6e6e" strokeWidth="1.2">
                          <rect x="0.6" y="0.6" width="12.8" height="10.8" rx="1" />
                          <path d="M1 2.5h12" strokeWidth="1.6" />
                        </svg>
                      </SideIcon>
                      top
                    </SideItem>
                  </SideSection>
                  <SideScroll>
                    <Tri $dir="left" $c="#a0a0a0" />
                    <SideThumb />
                    <SideRight>
                      <Tri $dir="right" />
                    </SideRight>
                  </SideScroll>
                </Sidebar>
                <CachePanel>
                  <CacheBar>
                    <BarButton>
                      <MdRefresh size={18} />
                    </BarButton>
                    <BarButton>
                      <MdClose size={16} />
                    </BarButton>
                    <FilterInput>Filter by Path</FilterInput>
                  </CacheBar>
                  <Table>
                    <Row $head>
                      <Cell>#</Cell>
                      <Cell>Name</Cell>
                      <Cell>Resp…</Cell>
                      <Cell>Cont…</Cell>
                      <Cell>Cont…</Cell>
                      <Cell>Time…</Cell>
                    </Row>
                    {entries.map(([n, name, type, size], i) => (
                      <Row key={n} $odd={i % 2 === 1}>
                        <Cell>{n}</Cell>
                        <Cell>{name}</Cell>
                        <Cell $right>basic</Cell>
                        <Cell>{type}</Cell>
                        <Cell $right={size !== '127,…'}>{size}</Cell>
                        <Cell>9/24…</Cell>
                      </Row>
                    ))}
                  </Table>
                  <Divider />
                  <Preview>Select a cache entry above to preview</Preview>
                  <StatusBar>Total entries: 8</StatusBar>
                </CachePanel>
              </DevBody>
              <Drawer>
                <DevTool $w={33}>
                  <MdMoreVert size={18} />
                </DevTool>
                <DrawerConsole $w={58}>Console</DrawerConsole>
                <DevTab $w={94} $active>
                  What's New&nbsp;
                  <X size={11} strokeWidth={2} color="#5f6368" />
                </DevTab>
                <DrawerClose>
                  <MdClose size={17} />
                </DrawerClose>
              </Drawer>
            </DevTools>
          </Content>
        </Browser>
      </Desktop>
    </Screen>
  )
}
